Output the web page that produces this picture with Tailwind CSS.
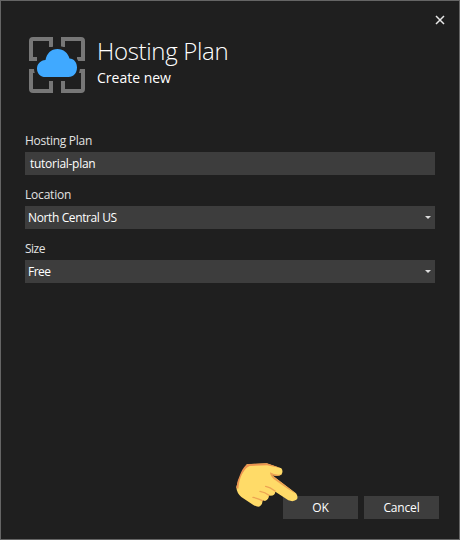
<!DOCTYPE html>
<html lang="en">
<head>
<meta charset="utf-8">
<title>Hosting Plan</title>
<script src="https://cdn.jsdelivr.net/npm/@tailwindcss/browser@4"></script>
</head>
<body class="bg-[#1f1f1f]">
<main class="relative flex h-[540px] w-[460px] flex-col border border-[#656565] bg-[#1f1f1f] font-['Open_Sans','Noto_Sans',sans-serif] text-[12px] leading-4 tracking-[-0.28px] text-white">
  <button aria-label="Close" class="absolute top-[14px] right-[14px]">
    <svg class="block" width="10" height="10" viewBox="0 0 10 10"><path d="M1 1l8 8M9 1L1 9" stroke="#e8e8e8" stroke-width="1.5"/></svg>
  </button>
  <header class="flex h-[131px] pt-[35px] pl-[27px]">
    <svg class="block shrink-0" width="58" height="58" viewBox="0 0 58 58">
      <path d="M9 23H3V5Q3 3 5 3H23V11M35 11V3H53Q55 3 55 5V23H49M9 35H3V53Q3 55 5 55H23V45M35 45V55H53Q55 55 55 53V35H49" fill="none" stroke="#777" stroke-width="4"/>
      <path d="M17.500 41C12.500 41 9 37.500 9 32.700C9 28 12.500 24.500 17.500 24.100C18.700 17.500 23 13 29.500 13C35.500 13 40 17 41.500 22.500C46 22.500 49 26.500 49 31.500C49 37 45.500 41 40.500 41Z" fill="none" stroke="#1f1f1f" stroke-width="6"/>
      <path d="M17.500 41C12.500 41 9 37.500 9 32.700C9 28 12.500 24.500 17.500 24.100C18.700 17.500 23 13 29.500 13C35.500 13 40 17 41.500 22.500C46 22.500 49 26.500 49 31.500C49 37 45.500 41 40.500 41Z" fill="#40a9ff"/>
    </svg>
    <div class="pl-[11px]">
      <h1 class="h-8 text-[24px] leading-[30px] font-light tracking-[-0.33px] whitespace-nowrap">Hosting Plan</h1>
      <p class="text-[14px] leading-[20px] tracking-normal">Create new</p>
    </div>
  </header>
  <section class="flex flex-col gap-[11px] pr-6 pl-6">
    <div>
      <div class="h-5 pt-px text-[#e2e2e2]">Hosting Plan</div>
      <div class="flex h-[23px] items-center bg-[#3d3d3d] pl-[5px]">tutorial-plan</div>
    </div>
    <div>
      <div class="h-5 pt-px tracking-[-0.2px] text-[#e2e2e2]">Location</div>
      <div class="flex h-[23px] items-center justify-between bg-[#3d3d3d] pr-1 pl-[3px]"><span class="tracking-[-0.38px]">North Central US</span><svg width="6" height="3" viewBox="0 0 6 3"><path d="M0 0H6L3 3Z" fill="#ddd"/></svg></div>
    </div>
    <div>
      <div class="h-5 pt-px tracking-[-0.5px] text-[#e2e2e2]">Size</div>
      <div class="flex h-[23px] items-center justify-between bg-[#3d3d3d] pr-1 pl-[3px]"><span class="tracking-[-0.5px]">Free</span><svg width="6" height="3" viewBox="0 0 6 3"><path d="M0 0H6L3 3Z" fill="#ddd"/></svg></div>
    </div>
  </section>
  <footer class="mt-auto mb-5 flex justify-end gap-[6px] pr-5">
    <button class="h-[23px] w-[75px] bg-[#3d3d3d] tracking-normal">OK</button>
    <button class="h-[23px] w-[75px] bg-[#3d3d3d] tracking-[-0.15px]">Cancel</button>
  </footer>
  <svg class="absolute top-[454px] left-[224px]" width="80" height="60" viewBox="0 0 240 180">
    <path d="M65 28L125 25L169 40Q176 49 169 59Q160 65 139 59L213 115Q220 124 216 133Q206 142 190 136L151 110Q150 122 137 122L132 121Q132 134 120 138L112 136Q114 148 105 154Q97 157 85 150L49 126Q35 114 34 96Q43 61 65 28Z" fill="#ffdb68"/>
    <path d="M34 99Q36 78 47 55Q57 31 70 27L125 25L166 39L126 31L74 33Q63 36 51 58Q42 75 40 101Z" fill="#eb9350"/>
    <path d="M135 52Q151 62 171 58Q157 66 142 61L215 118Q194 107 147 73Q135 63 135 52Z" fill="#eea252"/>
    <path d="M122 94Q135 96 150 108M105 109Q120 111 132 121M84 127Q98 130 112 137" fill="none" stroke="#eda453" stroke-width="4" stroke-linecap="round"/>
  </svg>
</main>
</body>
</html>
